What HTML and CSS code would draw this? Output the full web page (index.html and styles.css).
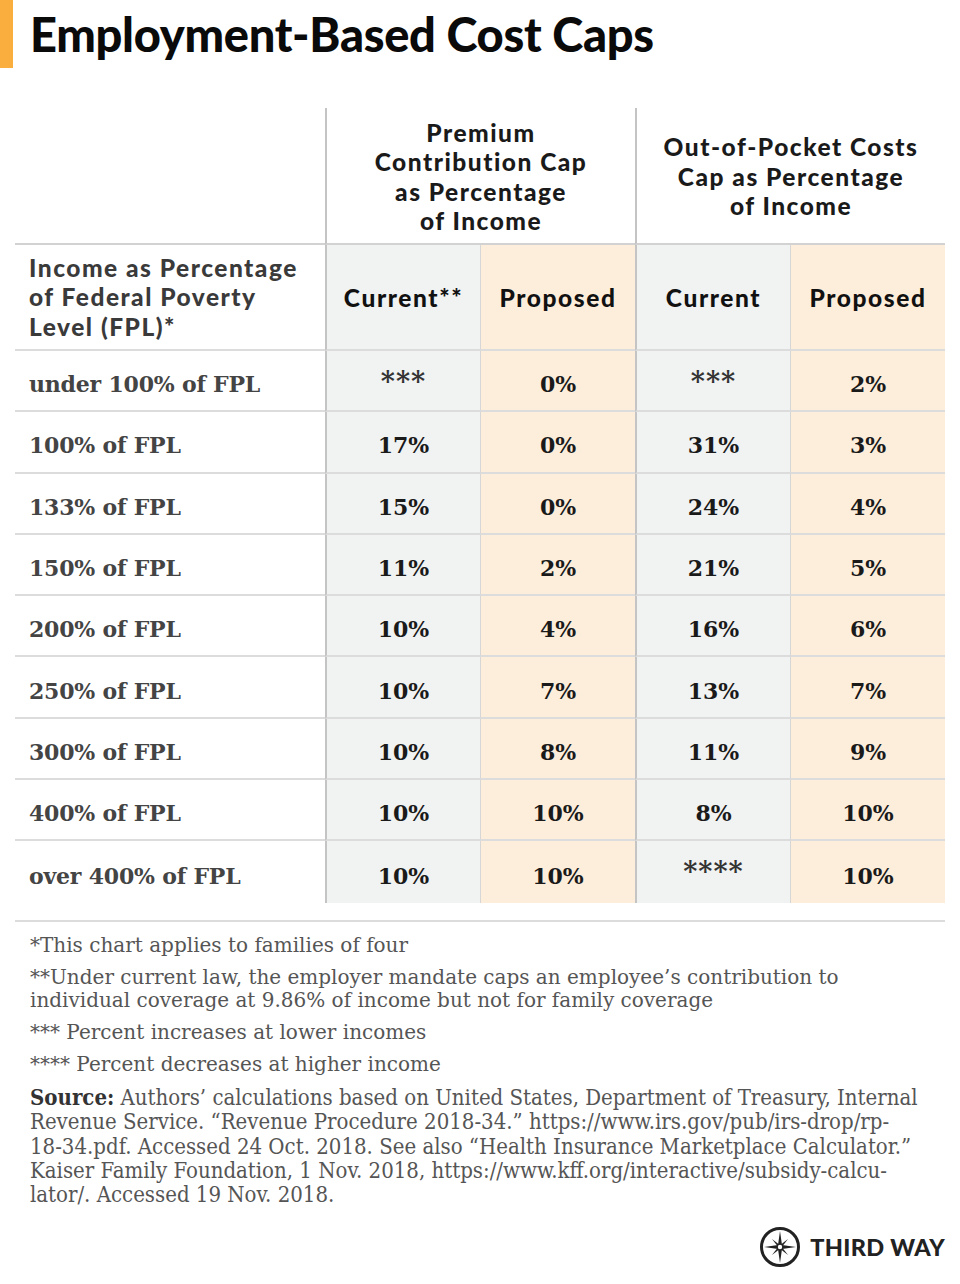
FILE: index.html
```html
<!DOCTYPE html>
<html>
<head>
<meta charset="utf-8">
<link rel="stylesheet" href="styles.css">
</head>
<body>
<div class="page">
  <header class="title-bar">
    <div class="accent"></div>
    <h1 class="title">Employment-Based Cost Caps</h1>
  </header>

  <div class="grid">
    <div class="cell h1 blank"></div>
    <div class="cell h1 group sep-strong">Premium<br>Contribution Cap<br>as Percentage<br>of Income</div>
    <div class="cell h1 group sep-strong">Out-of-Pocket Costs<br>Cap as Percentage<br>of Income</div>

    <div class="cell h2 label-head">Income as Percentage<br>of Federal Poverty<br>Level (FPL)*</div>
    <div class="cell h2 cur sep-strong">Current**</div>
    <div class="cell h2 prop sep-light">Proposed</div>
    <div class="cell h2 cur sep-strong">Current</div>
    <div class="cell h2 prop sep-light">Proposed</div>

    <div class="cell row label">under 100% of FPL</div>
    <div class="cell row cur sep-strong val stars">***</div>
    <div class="cell row prop sep-light val">0%</div>
    <div class="cell row cur sep-strong val stars">***</div>
    <div class="cell row prop sep-light val">2%</div>

    <div class="cell row label">100% of FPL</div>
    <div class="cell row cur sep-strong val">17%</div>
    <div class="cell row prop sep-light val">0%</div>
    <div class="cell row cur sep-strong val">31%</div>
    <div class="cell row prop sep-light val">3%</div>

    <div class="cell row label">133% of FPL</div>
    <div class="cell row cur sep-strong val">15%</div>
    <div class="cell row prop sep-light val">0%</div>
    <div class="cell row cur sep-strong val">24%</div>
    <div class="cell row prop sep-light val">4%</div>

    <div class="cell row label">150% of FPL</div>
    <div class="cell row cur sep-strong val">11%</div>
    <div class="cell row prop sep-light val">2%</div>
    <div class="cell row cur sep-strong val">21%</div>
    <div class="cell row prop sep-light val">5%</div>

    <div class="cell row label">200% of FPL</div>
    <div class="cell row cur sep-strong val">10%</div>
    <div class="cell row prop sep-light val">4%</div>
    <div class="cell row cur sep-strong val">16%</div>
    <div class="cell row prop sep-light val">6%</div>

    <div class="cell row label">250% of FPL</div>
    <div class="cell row cur sep-strong val">10%</div>
    <div class="cell row prop sep-light val">7%</div>
    <div class="cell row cur sep-strong val">13%</div>
    <div class="cell row prop sep-light val">7%</div>

    <div class="cell row label">300% of FPL</div>
    <div class="cell row cur sep-strong val">10%</div>
    <div class="cell row prop sep-light val">8%</div>
    <div class="cell row cur sep-strong val">11%</div>
    <div class="cell row prop sep-light val">9%</div>

    <div class="cell row label">400% of FPL</div>
    <div class="cell row cur sep-strong val">10%</div>
    <div class="cell row prop sep-light val">10%</div>
    <div class="cell row cur sep-strong val">8%</div>
    <div class="cell row prop sep-light val">10%</div>

    <div class="cell row last label">over 400% of FPL</div>
    <div class="cell row last cur sep-strong val">10%</div>
    <div class="cell row last prop sep-light val">10%</div>
    <div class="cell row last cur sep-strong val stars">****</div>
    <div class="cell row last prop sep-light val">10%</div>
  </div>

  <div class="rule"></div>

  <div class="notes">
    <p class="note">*This chart applies to families of four</p>
    <p class="note">**Under current law, the employer mandate caps an employee’s contribution to<br>individual coverage at 9.86% of income but not for family coverage</p>
    <p class="note">*** Percent increases at lower incomes</p>
    <p class="note">**** Percent decreases at higher income</p>
    <p class="source"><b>Source:</b> Authors’ calculations based on United States, Department of Treasury, Internal<br>Revenue Service. “Revenue Procedure 2018-34.” https://www.irs.gov/pub/irs-drop/rp-<br>18-34.pdf. Accessed 24 Oct. 2018. See also “Health Insurance Marketplace Calculator.”<br>Kaiser Family Foundation, 1 Nov. 2018, https://www.kff.org/interactive/subsidy-calcu-<br>lator/. Accessed 19 Nov. 2018.</p>
  </div>

  <footer class="brand">
    <svg class="logo" width="42" height="42" viewBox="0 0 42 42">
      <circle cx="21" cy="21" r="18.5" fill="none" stroke="#222" stroke-width="3"/>
      <polygon points="21,5 23,19 37,21 23,23 21,37 19,23 5,21 19,19" fill="#222"/>
      <polygon points="13,13 22,20 29,29 20,22" fill="#222"/>
      <polygon points="29,13 22,22 13,29 20,20" fill="#222"/>
      <circle cx="21" cy="21" r="2.2" fill="#fff"/>
    </svg>
    <span class="brand-name">THIRD WAY</span>
  </footer>
</div>
</body>
</html>
```

FILE: styles.css
```css
* { box-sizing: border-box; }
html, body { margin: 0; padding: 0; background: #fff; }
body { width: 960px; height: 1284px; overflow: hidden; }

.page { display: flex; flex-direction: column; }

.title-bar { display: flex; align-items: stretch; height: 68px; }
.accent { width: 13px; background: #f9ae3d; }
.title {
  margin: 0 0 0 17px;
  font-family: Lato, "Open Sans", sans-serif;
  font-weight: 900;
  font-size: 47px;
  line-height: 68px;
  color: #0a0a0a;
  letter-spacing: -0.3px;
}

.grid {
  margin: 40px 0 0 15px;
  width: 930px;
  display: grid;
  grid-template-columns: 310px 155px 155px 155px 155px;
  grid-template-rows: 137px 106px repeat(9, 61.3px);
}

.cell {
  display: flex;
  align-items: center;
  justify-content: center;
  text-align: center;
  border-bottom: 2px solid #dcdcdc;
}
.h1 { border-bottom: 2px solid #d2d2d2; }
.group {
  grid-column: span 2;
  font-family: Lato, "Open Sans", sans-serif;
  font-weight: 900;
  font-size: 24.5px;
  letter-spacing: 1.5px;
  line-height: 29.5px;
  color: #1a1a1a;
  padding-top: 2px;
}
.sep-strong { border-left: 2px solid #c4c4c4; }
.sep-light { border-left: 1px solid #d6d6d6; }

.h2 {
  font-family: Lato, "Open Sans", sans-serif;
  font-weight: 900;
  font-size: 24.5px;
  letter-spacing: 1.6px;
  color: #111;
}
.label-head {
  justify-content: flex-start;
  text-align: left;
  padding-left: 14px;
  line-height: 29.5px;
  color: #3a3a3a;
  letter-spacing: 1.5px;
}
.cur { background: #f1f2f2; }
.prop { background: #fdeedb; }

.row { padding-top: 7px; }
.row.last { border-bottom: none; }
.label {
  justify-content: flex-start;
  text-align: left;
  padding-left: 14px;
  font-family: "DejaVu Serif", "Liberation Serif", serif;
  font-weight: 700;
  font-size: 22px;
  color: #444;
  letter-spacing: -0.2px;
}
.val {
  font-family: "DejaVu Serif", "Liberation Serif", serif;
  font-weight: 700;
  font-size: 22px;
  color: #1a1a1a;
}
.row.stars {
  align-items: flex-start;
  padding-top: 15px;
  font-size: 27px;
  letter-spacing: 1px;
  color: #333;
}

.rule {
  margin: 17px 0 0 15px;
  width: 930px;
  height: 2px;
  background: #dcdcdc;
}

.notes {
  padding: 12px 0 0 30px;
  font-family: "DejaVu Serif", "Liberation Serif", serif;
  color: #555;
}
.note {
  margin: 0 0 8.5px 0;
  font-size: 20px;
  line-height: 23.5px;
}
.source {
  margin: 0;
  font-family: "DejaVu Serif", "Liberation Serif", serif;
  font-stretch: condensed;
  font-size: 22px;
  line-height: 24.3px;
  color: #555;
}
.source b { color: #333; }

.brand {
  display: flex;
  align-items: center;
  justify-content: flex-end;
  gap: 9px;
  margin: 18px 15px 0 0;
}
.brand-name {
  font-family: Lato, "Open Sans", sans-serif;
  font-weight: 900;
  font-size: 23.5px;
  letter-spacing: 0.3px;
  color: #222;
}
```
